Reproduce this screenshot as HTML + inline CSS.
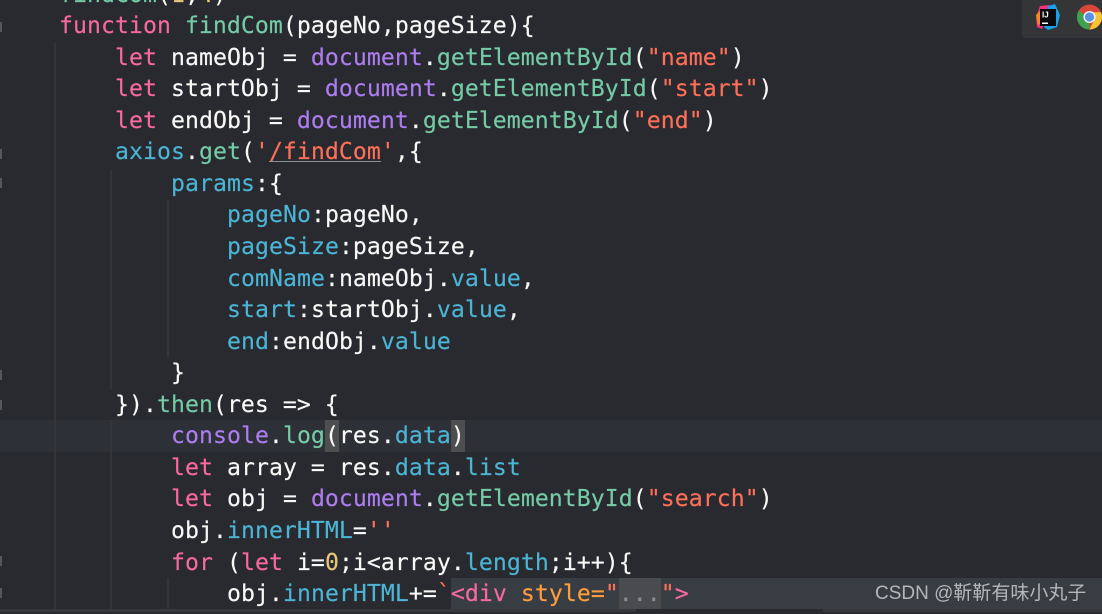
<!DOCTYPE html>
<html><head><meta charset="utf-8"><style>
html,body{margin:0;padding:0}
body{width:1102px;height:612px;overflow:hidden;background:#292a2f;position:relative}
.b{position:absolute}
.w{position:absolute;left:0;top:1.7px;width:1102px;height:612px}
.l{position:absolute;left:59px;white-space:pre;height:31.55px;font:23.15px/31.55px "DejaVu Sans Mono","Liberation Mono",monospace;letter-spacing:.06px;color:#f8f8f6;-webkit-text-stroke:.15px currentColor}
.k{color:#f7699f}.f{color:#74cba6}.p{color:#4cb4d4}.d{color:#ad7df0}.s{color:#ff7059}.n{color:#e8c77a}.o{color:#ff9c3c}.g{color:#8a8c8e}
.fm{position:absolute;left:0;width:2px;height:10px;background:#55575a}
</style></head><body>
<div class="b" style="left:0;top:420px;width:1102px;height:31.5px;background:#2e3038"></div>
<div class="b" style="left:54px;top:43px;width:2px;height:569px;background:#333438"></div>
<div class="b" style="left:110px;top:170px;width:2px;height:219px;background:#333438"></div>
<div class="b" style="left:110px;top:420px;width:2px;height:192px;background:#333438"></div>
<div class="b" style="left:167px;top:200px;width:2px;height:157px;background:#333438"></div>
<div class="b" style="left:167px;top:578px;width:2px;height:34px;background:#333438"></div>
<div class="b" style="left:451px;top:578px;width:651px;height:31px;background:#383d44"></div>
<div class="b" style="left:0;top:609px;width:636px;height:3px;background:#36383c"></div>
<div class="b" style="left:823px;top:609px;width:279px;height:3px;background:#36383c"></div>
<div class="b" style="left:325px;top:420px;width:14px;height:31.5px;background:#4d4e50"></div>
<div class="b" style="left:451px;top:420px;width:14px;height:31.5px;background:#4d4e50"></div>
<div class="b" style="left:619px;top:578px;width:42px;height:31px;background:#4a4b4f"></div>
<div class="b" style="left:269px;top:161px;width:112px;height:1px;background:#8a8f98"></div>
<i class="fm" style="top:22px"></i><i class="fm" style="top:149px"></i><i class="fm" style="top:178px"></i><i class="fm" style="top:370px"></i><i class="fm" style="top:400px"></i><i class="fm" style="top:556px"></i><i class="fm" style="top:588px"></i>
<div class="w">
<div class="l" style="top:-22px;"><span class="f">findCom</span>(<span class="n">1</span>,<span class="n">4</span>)</div>
<div class="l" style="top:9.5px"><span class="k">function</span> <span class="f">findCom</span>(pageNo,pageSize){</div>
<div class="l" style="top:41px;left:115px"><span class="k">let</span> nameObj = <span class="d">document</span>.<span class="f">getElementById</span>(<span class="s">"name"</span>)</div>
<div class="l" style="top:72.6px;left:115px"><span class="k">let</span> startObj = <span class="d">document</span>.<span class="f">getElementById</span>(<span class="s">"start"</span>)</div>
<div class="l" style="top:104.2px;left:115px"><span class="k">let</span> endObj = <span class="d">document</span>.<span class="f">getElementById</span>(<span class="s">"end"</span>)</div>
<div class="l" style="top:135.7px;left:115px"><span class="p">axios</span>.<span class="f">get</span>(<span class="s">'/findCom'</span>,{</div>
<div class="l" style="top:167.3px;left:171px"><span class="p">params</span>:{</div>
<div class="l" style="top:198.8px;left:227px"><span class="p">pageNo</span>:pageNo,</div>
<div class="l" style="top:230.4px;left:227px"><span class="p">pageSize</span>:pageSize,</div>
<div class="l" style="top:261.9px;left:227px"><span class="p">comName</span>:nameObj.<span class="p">value</span>,</div>
<div class="l" style="top:293.5px;left:227px"><span class="p">start</span>:startObj.<span class="p">value</span>,</div>
<div class="l" style="top:325px;left:227px"><span class="p">end</span>:endObj.<span class="p">value</span></div>
<div class="l" style="top:356.6px;left:171px">}</div>
<div class="l" style="top:388.1px;left:115px">}).<span class="f">then</span>(res =&gt; {</div>
<div class="l" style="top:419.7px;left:171px"><span class="d">console</span>.<span class="f">log</span>(res.<span class="p">data</span>)</div>
<div class="l" style="top:451.2px;left:171px"><span class="k">let</span> array = res.<span class="p">data</span>.<span class="p">list</span></div>
<div class="l" style="top:482.8px;left:171px"><span class="k">let</span> obj = <span class="d">document</span>.<span class="f">getElementById</span>(<span class="s">"search"</span>)</div>
<div class="l" style="top:514.3px;left:171px">obj.<span class="p">innerHTML</span>=<span class="s">''</span></div>
<div class="l" style="top:545.9px;left:171px"><span class="k">for</span> (<span class="k">let</span> i=<span class="n">0</span>;i&lt;array.<span class="p">length</span>;i++){</div>
<div class="l" style="top:577.4px;left:227px">obj.<span class="p">innerHTML</span>+=<span class="s">`</span><span class="k">&lt;div</span> <span class="o">style=</span><span class="s">"</span><span class="g">...</span><span class="s">"</span><span class="k">&gt;</span></div>
</div>
<div class="b" style="left:1022px;top:0;width:80px;height:38px;background:#333536;border-bottom-left-radius:4px"></div>
<svg class="b" style="left:1034px;top:3px" width="28" height="28" viewBox="0 0 28 28">
<polygon points="6,3 15,2 16,8 8,26 3,24 2,14" fill="#f0327e"/>
<polygon points="2,12 6,8 8,20 4,22" fill="#f58a1f"/>
<polygon points="14,3 21,1 26,12 23,24 14,27 10,24" fill="#1a9fe8"/>
<rect x="6" y="6" width="16" height="17" fill="#0a0a0c"/>
<text x="8" y="14.5" font-family="Liberation Sans" font-weight="700" font-size="8" fill="#fff">IJ</text>
<rect x="8" y="19.5" width="6" height="1.5" fill="#fff"/>
</svg>
<svg class="b" style="left:1077px;top:4px" width="25" height="26" viewBox="0 0 26 26">
<circle cx="13" cy="13" r="13" fill="#d9473a"/>
<path d="M13 13 L1.7 19.5 A13 13 0 0 1 1.7 6.5 L7 10 Z" fill="#3da24f"/>
<path d="M13 13 L1.7 19.5 A13 13 0 0 0 13 26 Z" fill="#3da24f"/>
<path d="M13 8 H25 A13 13 0 0 1 13 26 L18 16 Z" fill="#f6c632"/>
<circle cx="13" cy="13" r="6.3" fill="#f2f2f2"/>
<circle cx="13" cy="13" r="4.8" fill="#5b8fe6"/>
</svg>
<div class="b" style="left:875px;top:582px;white-space:pre;font:19px/24px 'Liberation Sans','Noto Sans CJK SC',sans-serif;color:#b4b6b8">CSDN @靳靳有味小丸子</div>
</body></html>
